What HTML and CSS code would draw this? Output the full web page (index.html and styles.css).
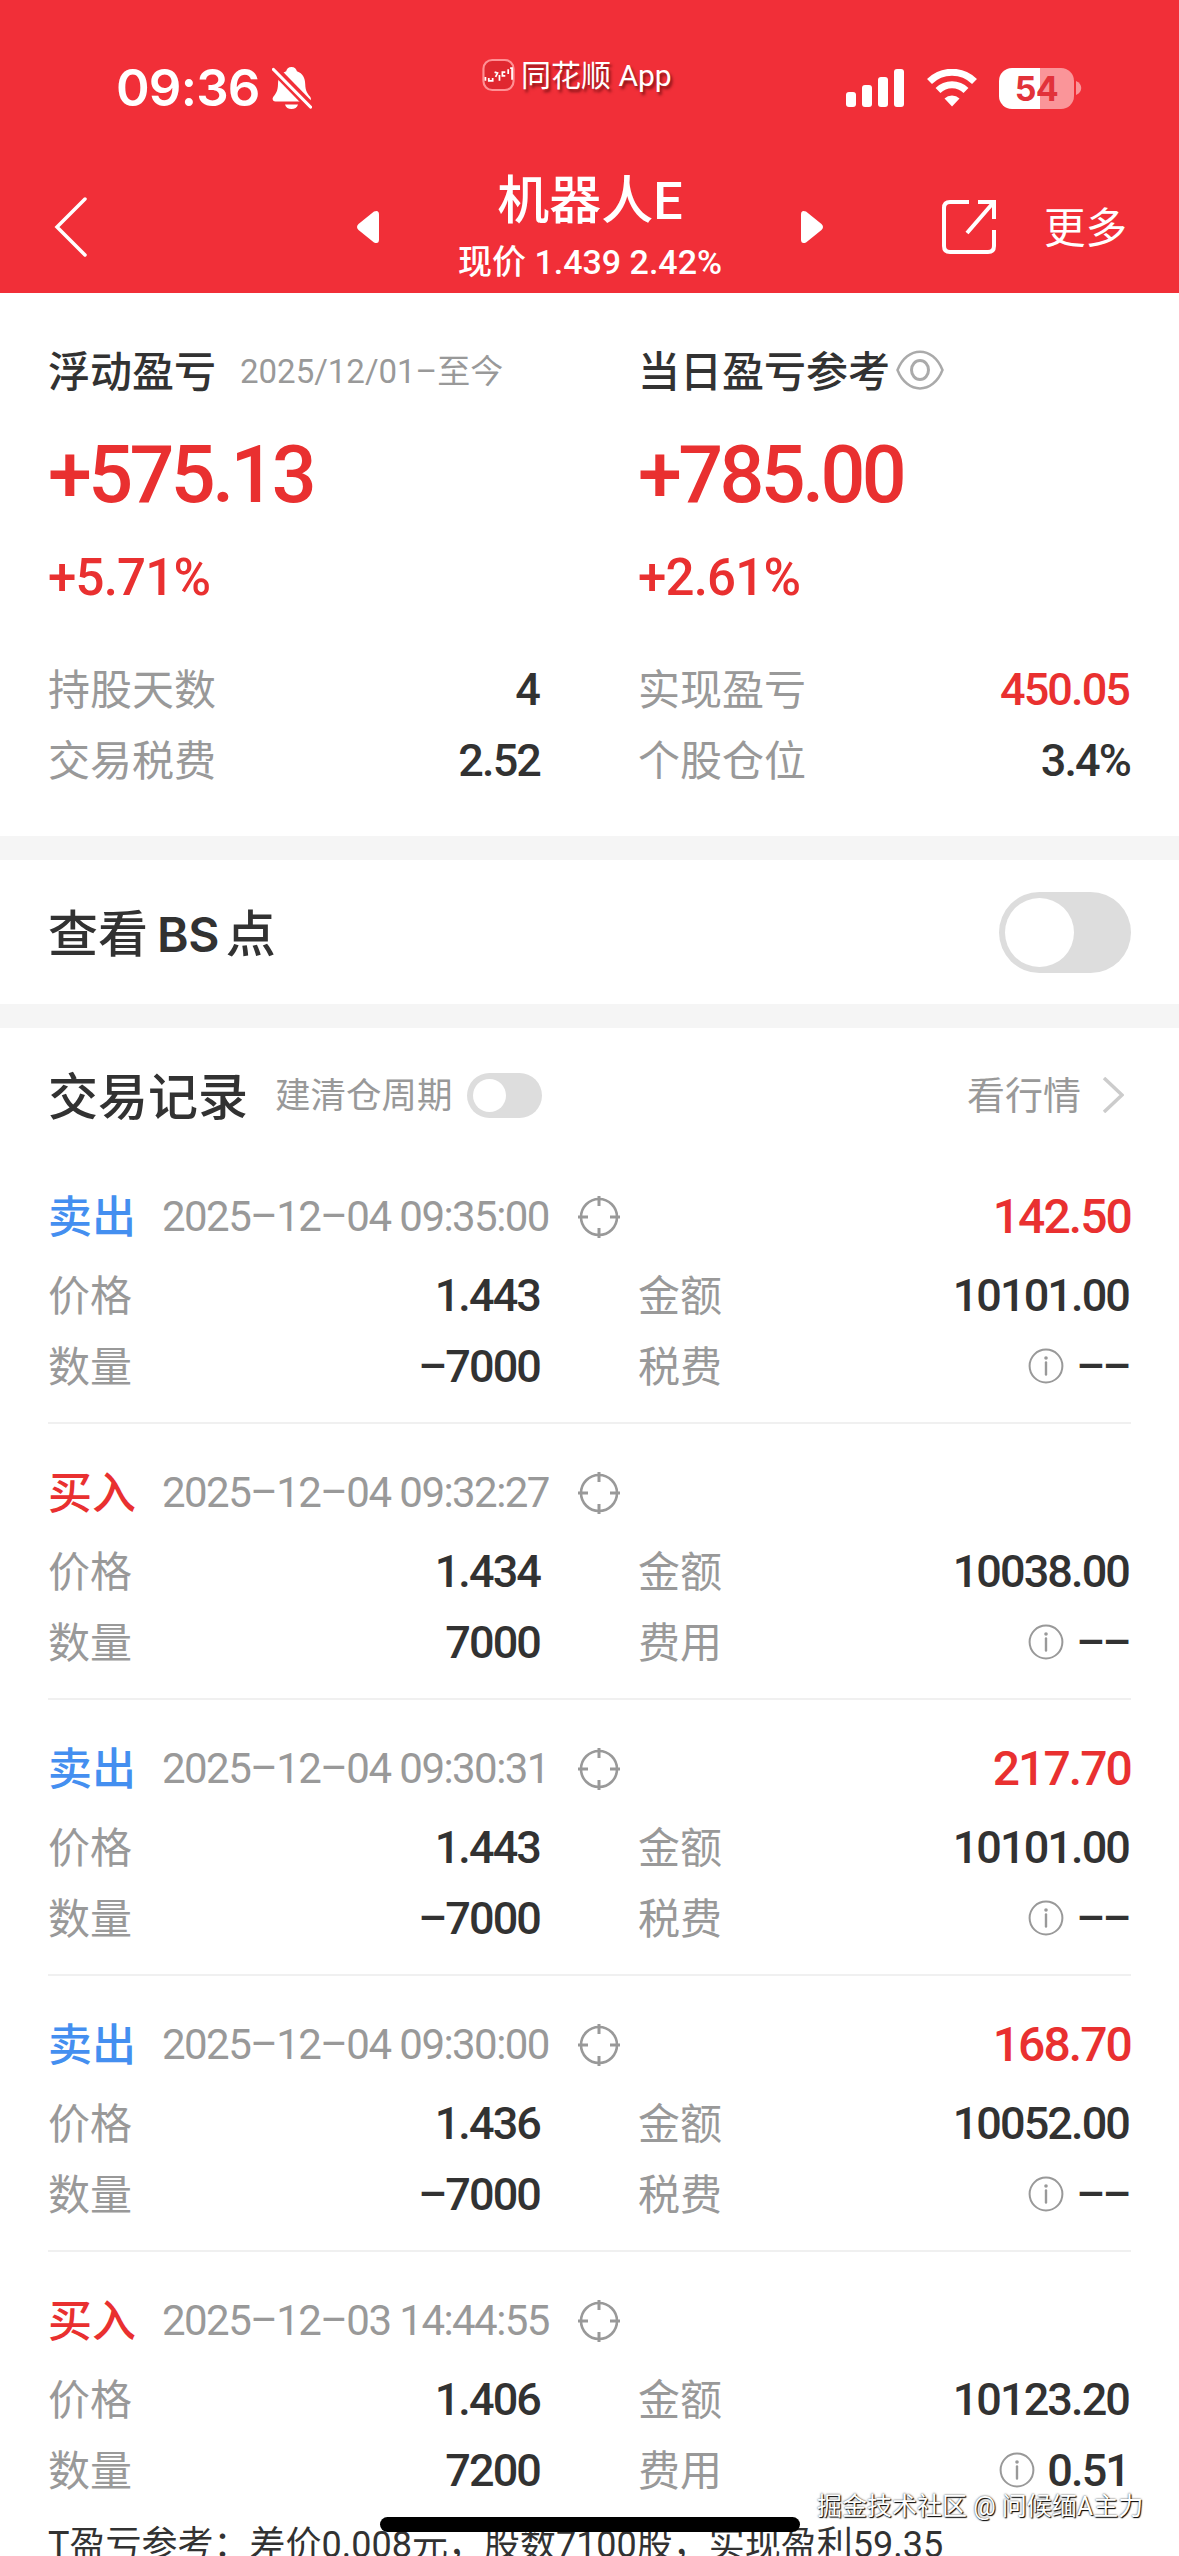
FILE: index.html
```html
<!DOCTYPE html>
<html lang="zh-CN">
<head>
    <meta charset="UTF-8">
    <title>机器人E</title>
    <link rel="stylesheet" href="styles.css">
</head>
<body>
    <svg class="sprite">
        <symbol id="target" viewBox="0 0 44 44">
            <circle cx="22" cy="22" r="18" fill="none" stroke="#999" stroke-width="2.6"/>
            <path d="M22 1v10M22 33v10M1 22h10M33 22h10" stroke="#999" stroke-width="3"/>
        </symbol>
        <symbol id="info" viewBox="0 0 36 36">
            <circle cx="18" cy="18" r="16.4" fill="none" stroke="#999" stroke-width="2"/>
            <path d="M18 14.5v12" stroke="#999" stroke-width="2.4" stroke-linecap="round"/>
            <circle cx="18" cy="10" r="1.8" fill="#999"/>
        </symbol>
    </svg>

    <div class="page">
        <header class="header">
            <div class="status">
                <span class="time">09:36</span>
                <svg class="bell" viewBox="0 0 40 44">
                    <path d="M19.5 1c3 0 5 2 5.4 4.3C31 7.5 33 12 33.2 18c.2 7 2.2 9.5 4.8 12.5 1.8 2.2.8 5-2 5H3.5c-2.8 0-3.8-2.8-2-5C4 27.5 5.8 25 6 18c.2-6 2.2-10.5 8.2-12.7C14.5 3 16.5 1 19.5 1zM13 38.5h13c-.8 3-3.3 4.5-6.5 4.5S13.8 41.500 13 38.500z" fill="#fff"/>
                    <path d="M1 2l38 39" stroke="#f12f38" stroke-width="9"/>
                    <path d="M1.5 3.5l37 37.5" stroke="#fff" stroke-width="3.2" stroke-linecap="round"/>
                </svg>
                <div class="app-tag">
                    <svg class="app-logo" viewBox="0 0 34 34">
                        <rect x="1.5" y="1.5" width="31" height="31" rx="9" fill="#e02830" stroke="#ff9094" stroke-width="2.2"/>
                        <path d="M3.5 19v4M7 20v3h4v-3M13 14l3 1-2 4M18 17v6M24 14h-3v4h3M27 11v5M29 10h2v12" fill="none" stroke="#fff" stroke-width="1.8"/>
                    </svg>
                    <span>同花顺 App</span>
                </div>
                <svg class="signal" viewBox="0 0 58 38">
                    <rect x="0" y="23" width="10" height="15" rx="3" fill="#fff"/>
                    <rect x="16" y="16" width="10" height="22" rx="3" fill="#fff"/>
                    <rect x="32" y="8" width="10" height="30" rx="3" fill="#fff"/>
                    <rect x="48" y="0" width="10" height="38" rx="3" fill="#fff"/>
                </svg>
                <svg class="wifi" viewBox="0 0 52 38">
                    <path d="M3.5 12.5a32 32 0 0 1 45 0M12 21.5a20 20 0 0 1 28 0" fill="none" stroke="#fff" stroke-width="7"/>
                    <path d="M26 37.5l-7.5-8a11 11 0 0 1 15 0z" fill="#fff"/>
                </svg>
                <div class="battery">54</div>
                <svg class="battery-cap" viewBox="0 0 6 14"><path d="M0 0c7 3 7 11 0 14z" fill="#fa9599"/></svg>
            </div>
            <div class="nav">
                <svg class="back" viewBox="0 0 34 60"><path d="M31 2L3 30l28 28" fill="none" stroke="#fff" stroke-width="3.5" stroke-linecap="round"/></svg>
                <svg class="prev" viewBox="0 0 24 34"><path d="M18 1.5L2.5 14q-3 3 0 6L18 32.5q5 2 5-3v-25q0-5-5-3z" fill="#fff"/></svg>
                <div class="title">
                    <h1>机器人E</h1>
                    <p>现价 1.439 2.42%</p>
                </div>
                <svg class="next" viewBox="0 0 24 34"><path d="M6 1.5L21.5 14q3 3 0 6L6 32.5q-5 2-5-3v-25q0-5 5-3z" fill="#fff"/></svg>
                <svg class="share" viewBox="0 0 56 56"><path d="M28 3H9Q3 3 3 9v38q0 6 6 6h38q6 0 6-6V31M37 3h16v17M52 4L26 34" fill="none" stroke="#fff" stroke-width="4"/></svg>
                <span class="more">更多</span>
            </div>
        </header>

        <section class="summary">
            <div class="col">
                <div class="caption"><b>浮动盈亏</b><span class="since">2025/12/01–至今</span></div>
                <div class="profit">+575.13</div>
                <div class="rate">+5.71%</div>
                <div class="row"><span>持股天数</span><b>4</b></div>
                <div class="row"><span>交易税费</span><b>2.52</b></div>
            </div>
            <div class="col">
                <div class="caption">
                    <b>当日盈亏参考</b>
                    <svg class="eye" viewBox="0 0 48 40">
                        <path d="M1.5 20C11-4.5 37-4.5 46.5 20 37 44.5 11 44.5 1.5 20z" fill="none" stroke="#aaa" stroke-width="2.5"/>
                        <ellipse cx="24" cy="20" rx="8.5" ry="9.5" fill="none" stroke="#aaa" stroke-width="3"/>
                    </svg>
                </div>
                <div class="profit">+785.00</div>
                <div class="rate">+2.61%</div>
                <div class="row"><span>实现盈亏</span><b class="red">450.05</b></div>
                <div class="row"><span>个股仓位</span><b>3.4%</b></div>
            </div>
        </section>

        <section class="bs">
            <h2>查看<span>BS</span>点</h2>
            <div class="switch"></div>
        </section>

        <section class="records">
            <div class="records-head">
                <h2>交易记录</h2>
                <span class="cycle">建清仓周期</span>
                <div class="switch small"></div>
                <span class="quote">看行情</span>
                <svg class="arrow" viewBox="0 0 22 36"><path d="M2 1l18 17L2 35" fill="none" stroke="#ccc" stroke-width="3.5"/></svg>
            </div>

            <div class="record">
                <div class="record-head"><b class="sell">卖出</b><time>2025–12–04 09:35:00</time><svg class="target"><use href="#target"/></svg><b class="gain">142.50</b></div>
                <div class="grid">
                    <div class="row"><span>价格</span><b>1.443</b></div>
                    <div class="row"><span>金额</span><b>10101.00</b></div>
                    <div class="row"><span>数量</span><b>–7000</b></div>
                    <div class="row"><span>税费</span><svg class="info"><use href="#info"/></svg><b class="none">––</b></div>
                </div>
            </div>

            <div class="record">
                <div class="record-head"><b class="buy">买入</b><time>2025–12–04 09:32:27</time><svg class="target"><use href="#target"/></svg></div>
                <div class="grid">
                    <div class="row"><span>价格</span><b>1.434</b></div>
                    <div class="row"><span>金额</span><b>10038.00</b></div>
                    <div class="row"><span>数量</span><b>7000</b></div>
                    <div class="row"><span>费用</span><svg class="info"><use href="#info"/></svg><b class="none">––</b></div>
                </div>
            </div>

            <div class="record">
                <div class="record-head"><b class="sell">卖出</b><time>2025–12–04 09:30:31</time><svg class="target"><use href="#target"/></svg><b class="gain">217.70</b></div>
                <div class="grid">
                    <div class="row"><span>价格</span><b>1.443</b></div>
                    <div class="row"><span>金额</span><b>10101.00</b></div>
                    <div class="row"><span>数量</span><b>–7000</b></div>
                    <div class="row"><span>税费</span><svg class="info"><use href="#info"/></svg><b class="none">––</b></div>
                </div>
            </div>

            <div class="record">
                <div class="record-head"><b class="sell">卖出</b><time>2025–12–04 09:30:00</time><svg class="target"><use href="#target"/></svg><b class="gain">168.70</b></div>
                <div class="grid">
                    <div class="row"><span>价格</span><b>1.436</b></div>
                    <div class="row"><span>金额</span><b>10052.00</b></div>
                    <div class="row"><span>数量</span><b>–7000</b></div>
                    <div class="row"><span>税费</span><svg class="info"><use href="#info"/></svg><b class="none">––</b></div>
                </div>
            </div>

            <div class="record">
                <div class="record-head"><b class="buy">买入</b><time>2025–12–03 14:44:55</time><svg class="target"><use href="#target"/></svg></div>
                <div class="grid">
                    <div class="row"><span>价格</span><b>1.406</b></div>
                    <div class="row"><span>金额</span><b>10123.20</b></div>
                    <div class="row"><span>数量</span><b>7200</b></div>
                    <div class="row"><span>费用</span><svg class="info"><use href="#info"/></svg><b>0.51</b></div>
                </div>
            </div>
            <p class="t-note">T盈亏参考&#xFF1A;差价0.008元&#xFF0C;股数7100股&#xFF0C;实现盈利59.35</p>
        </section>

        <div class="home-bar"></div>
        <div class="watermark">掘金技术社区 @ 问候缅A主力</div>
    </div>
</body>
</html>
```
FILE: styles.css
```css
* {
    box-sizing: border-box;
    margin: 0;
    padding: 0;
}

body {
    background: #fff;
    color: #323232;
    font-family: Roboto, "Noto Sans CJK SC", sans-serif;
}

b,
h1,
h2 {
    font-weight: 500;
}

svg {
    display: block;
    flex: none;
}

.sprite {
    position: absolute;
    width: 0;
    height: 0;
}

.page {
    position: relative;
    width: 1179px;
    height: 2556px;
    overflow: hidden;
    white-space: nowrap;
}

/* header */
.header {
    height: 293px;
    background: #f12f38;
    color: #fff;
}

.status {
    display: flex;
    align-items: center;
    height: 176px;
    padding-left: 116px;
}

.time {
    width: 156px;
    font: 600 51px/60px Inter, sans-serif;
    letter-spacing: -0.8px;
}

.bell {
    width: 40px;
    height: 44px;
}

.app-tag {
    display: flex;
    align-items: center;
    gap: 6px;
    width: 364px;
    margin: -26px 0 0 170px;
    font-size: 30px;
    line-height: 40px;
    text-shadow: 2px 3px 3px rgba(60, 0, 0, 0.6);
}

.app-tag span {
    padding-top: 2px;
}

.app-logo {
    width: 33px;
    height: 34px;
}

.signal {
    width: 58px;
    height: 38px;
}

.wifi {
    width: 52px;
    height: 38px;
    margin-left: 22px;
}

.battery {
    width: 75px;
    height: 41px;
    margin-left: 21px;
    border-radius: 13px;
    background: linear-gradient(90deg, #fff 41px, #fa9599 41px);
    color: #e2323a;
    font: 700 34px/41px Inter, sans-serif;
    letter-spacing: -0.5px;
    text-align: center;
}

.battery-cap {
    width: 6px;
    height: 14px;
    margin-left: 2px;
}

.nav {
    display: flex;
    align-items: center;
    height: 101px;
    padding-left: 54px;
}

.back {
    width: 34px;
    height: 60px;
}

.prev,
.next {
    width: 24px;
    height: 34px;
}

.prev {
    margin-left: 268px;
}

.title {
    width: 420px;
    height: 114px;
    text-align: center;
}

.title h1 {
    font-size: 52px;
    line-height: 63px;
}

.title p {
    font-size: 34px;
    line-height: 58px;
    font-weight: 500;
}

.share {
    width: 56px;
    height: 56px;
    margin-left: 117px;
}

.more {
    margin-left: 47px;
    padding-top: 5px;
    font-size: 41.5px;
    line-height: 60px;
}

/* summary */
.summary {
    display: grid;
    grid-template-columns: 491px 491px;
    gap: 99px;
    height: 567px;
    padding: 42px 48px 0;
    border-bottom: 24px solid #f5f5f5;
}

.caption {
    display: flex;
    align-items: center;
    height: 72px;
    font-size: 42px;
}

.caption b,
.caption span {
    padding-bottom: 5px;
}

.since {
    margin-left: 24px;
    color: #999;
    font-size: 33px;
}

.eye {
    width: 48px;
    height: 40px;
    margin: 0 0 3px 6px;
}

.profit {
    height: 134px;
    color: #e93030;
    font-size: 79px;
    font-weight: 500;
    line-height: 136px;
    letter-spacing: -3.6px;
}

.rate {
    height: 77px;
    color: #e93030;
    font-size: 51px;
    font-weight: 500;
    line-height: 74px;
    letter-spacing: -0.8px;
}

.rate + .row {
    margin-top: 35px;
}

.row {
    display: flex;
    align-items: center;
    height: 71px;
}

.row span {
    margin-right: auto;
    padding-bottom: 5px;
    color: #999;
    font-size: 42px;
}

.row b {
    padding-top: 2px;
    font-size: 45px;
    letter-spacing: -1.9px;
}

.row .red {
    color: #e93030;
}

.row .none {
    letter-spacing: -2.5px;
}

/* BS switch */
.bs {
    display: flex;
    align-items: center;
    justify-content: space-between;
    height: 168px;
    padding: 0 48px;
    border-bottom: 24px solid #f5f5f5;
}

h2 {
    padding-bottom: 4px;
    font-size: 50px;
}

.bs h2 span {
    margin: 0 7px 0 9px;
    font-family: Inter, sans-serif;
    font-weight: 600;
    font-size: 48px;
    letter-spacing: -0.5px;
}

.switch {
    width: 132px;
    height: 81px;
    padding: 6px;
    border-radius: 41px;
    background: #ddd;
}

.switch::before {
    content: "";
    display: block;
    width: 69px;
    height: 69px;
    border-radius: 50%;
    background: #fff;
}

.switch.small {
    width: 75px;
    height: 45px;
}

.switch.small::before {
    width: 33px;
    height: 33px;
}

/* records */
.records {
    padding: 0 48px;
}

.records-head {
    display: flex;
    align-items: center;
    height: 134px;
    margin-bottom: -14px;
}

.cycle {
    margin: 0 14px 0 27px;
    padding-bottom: 5px;
    color: #999;
    font-size: 35.5px;
}

.quote {
    margin-left: auto;
    padding-bottom: 5px;
    color: #999;
    font-size: 38px;
}

.arrow {
    width: 22px;
    height: 36px;
    margin: 0 7px 0 21px;
}

.record {
    height: 276px;
    padding-top: 26px;
    border-bottom: 2px solid #f0f0f0;
}

.record:nth-last-child(2) {
    border-bottom: 0;
}

.record-head {
    display: flex;
    align-items: center;
    height: 85px;
    font-size: 44px;
}

.sell,
.buy {
    padding-bottom: 5px;
}

.sell {
    color: #448ff0;
}

.buy {
    color: #e93030;
}

time {
    width: 388px;
    margin: 0 27px 0 26px;
    color: #999;
    font-size: 42px;
    letter-spacing: -1.55px;
}

.target {
    width: 44px;
    height: 44px;
}

.gain {
    margin-left: auto;
    color: #e93030;
    font-size: 48px;
    letter-spacing: -1.9px;
}

.grid {
    display: grid;
    grid-template-columns: 491px 491px;
    column-gap: 99px;
}

.row:nth-child(odd) b {
    margin-right: -1px;
}

.info {
    width: 36px;
    height: 36px;
    margin-right: 12px;
}

.t-note {
    margin-top: -8px;
    font-size: 36px;
    line-height: 50px;
}

.home-bar {
    position: absolute;
    left: 380px;
    top: 2517px;
    width: 420px;
    height: 15px;
    border-radius: 8px;
    background: #000;
}

.watermark {
    position: absolute;
    left: 817px;
    top: 2489px;
    color: #fff;
    font-size: 25px;
    line-height: 36px;
    text-shadow: 1px 1px 1px #000, 0 0 2px #333;
}
```
